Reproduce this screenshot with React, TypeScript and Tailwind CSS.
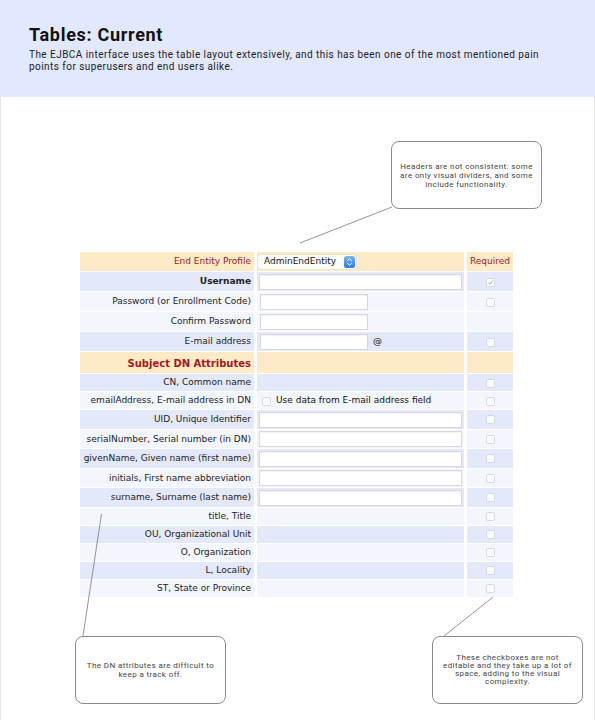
import React from "react";

const RED = "text-[#a3191c]";

function Check({ checked = false }: { checked?: boolean }) {
  return (
    <span className="flex h-[9px] w-[9px] items-center justify-center rounded-[2px] border border-[#d6d9e0] bg-[#fbfcfe]">
      {checked && (
        <svg width="7" height="7" viewBox="0 0 7 7">
          <path d="M1.2 3.8 L2.8 5.3 L5.8 1.5" fill="none" stroke="#9a9a9a" strokeWidth="0.9" />
        </svg>
      )}
    </span>
  );
}

function Input({ wide = false }: { wide?: boolean }) {
  return (
    <div
      className={`h-[16px] ${wide ? "ml-[2px] w-[203px]" : "ml-[3px] w-[108px]"} border border-[#d5d8de] bg-white shadow-[inset_0_1px_1px_rgba(0,0,0,0.05)]`}
    />
  );
}

type RowProps = {
  label: React.ReactNode;
  bg: string;
  h: string;
  value?: React.ReactNode;
  req?: React.ReactNode;
  bold?: boolean;
};

function Row({ label, bg, h, value, req, bold }: RowProps) {
  return (
    <div className={`grid grid-cols-[174px_207px_46px] gap-x-[3px] ${h}`}>
      <div className={`${bg} flex items-center justify-end pr-[3px] pt-[1px] ${bold ? "font-bold" : ""}`}>{label}</div>
      <div className={`${bg} flex items-center pt-[1px]`}>{value}</div>
      <div className={`${bg} flex items-center justify-center pt-[1px]`}>{req}</div>
    </div>
  );
}

const BLUE = "bg-[#e3e9fb]";
const LIGHT = "bg-[#f4f6fd]";
const PEACH = "bg-[#fdebc8]";

const CALLOUT =
  "absolute flex h-[68px] w-[151px] items-center justify-center whitespace-nowrap rounded-[8px] border border-[#8c8c8c] bg-white text-center text-[8px] tracking-[0.4px] text-[#444]";

export default function App() {
  return (
    <div className="relative h-[720px] w-[595px] overflow-hidden bg-white font-['Roboto',sans-serif]">
      <header className="h-[97px] bg-[#e2e8fd] px-[29px] pt-[24px]">
        <h1 className="text-[18px] font-bold leading-[22px] tracking-[0.7px] text-[#111]">Tables: Current</h1>
        <p className="mt-[3px] whitespace-nowrap text-[10px] leading-[11.5px] tracking-[0.45px] text-[#222]">
          The EJBCA interface uses the table layout extensively, and this has been one of the most mentioned pain
          <br />
          points for superusers and end users alike.
        </p>
      </header>
      <div className="h-[623px] border-x border-[#e4e4e4] pl-[79px] pt-[155px]">
        <div className="flex flex-col gap-y-[1px] font-['DejaVu_Sans','Verdana',sans-serif] text-[9px] text-[#222]">
          <Row
            bg={PEACH}
            h="h-[19px]"
            label={<span className={RED}>End Entity Profile</span>}
            value={
              <div className="ml-[1px] flex h-[14px] w-[98px] items-center justify-between rounded-[2px] bg-white pl-[6px] pr-[1px] shadow-[0_0_1px_rgba(0,0,0,0.35)]">
                <span className="text-[#111]">AdminEndEntity</span>
                <svg width="11" height="12" viewBox="0 0 11 12">
                  <defs>
                    <linearGradient id="g" x1="0" y1="0" x2="0" y2="1">
                      <stop offset="0" stopColor="#7fb3f5" />
                      <stop offset="1" stopColor="#2f7ae5" />
                    </linearGradient>
                  </defs>
                  <rect x="0" y="0" width="11" height="12" rx="2.5" fill="url(#g)" />
                  <path d="M3.3 4.8 L5.5 2.8 L7.7 4.8" fill="none" stroke="#fff" strokeWidth="1" />
                  <path d="M3.3 7.2 L5.5 9.2 L7.7 7.2" fill="none" stroke="#fff" strokeWidth="1" />
                </svg>
              </div>
            }
            req={<span className={RED}>Required</span>}
          />
          <Row bg={BLUE} h="h-[19px]" bold label="Username" value={<Input wide />} req={<Check checked />} />
          <Row bg={LIGHT} h="h-[19px]" label="Password (or Enrollment Code)" value={<Input />} req={<Check />} />
          <Row bg={LIGHT} h="h-[19px]" label="Confirm Password" value={<Input />} />
          <Row
            bg={BLUE}
            h="h-[19px]"
            label="E-mail address"
            value={
              <>
                <Input />
                <span className="ml-[5px] text-[#111]">@</span>
              </>
            }
            req={<Check />}
          />
          <Row
            bg={PEACH}
            h="h-[21px]"
            label={<span className={`${RED} text-[10px] font-bold`}>Subject DN Attributes</span>}
          />
          <Row bg={BLUE} h="h-[17px]" label="CN, Common name" req={<Check />} />
          <Row
            bg={LIGHT}
            h="h-[17px]"
            label="emailAddress, E-mail address in DN"
            value={
              <div className="ml-[5px] flex items-center gap-[5px]">
                <Check />
                <span className="text-[#111]">Use data from E-mail address field</span>
              </div>
            }
            req={<Check />}
          />
          <Row bg={BLUE} h="h-[18.5px]" label="UID, Unique Identifier" value={<Input wide />} req={<Check />} />
          <Row bg={LIGHT} h="h-[18.5px]" label="serialNumber, Serial number (in DN)" value={<Input wide />} req={<Check />} />
          <Row bg={BLUE} h="h-[18.5px]" label="givenName, Given name (first name)" value={<Input wide />} req={<Check />} />
          <Row bg={LIGHT} h="h-[18.5px]" label="initials, First name abbreviation" value={<Input wide />} req={<Check />} />
          <Row bg={BLUE} h="h-[18.5px]" label="surname, Surname (last name)" value={<Input wide />} req={<Check />} />
          <Row bg={LIGHT} h="h-[17px]" label="title, Title" req={<Check />} />
          <Row bg={BLUE} h="h-[17px]" label="OU, Organizational Unit" req={<Check />} />
          <Row bg={LIGHT} h="h-[17px]" label="O, Organization" req={<Check />} />
          <Row bg={BLUE} h="h-[17px]" label="L, Locality" req={<Check />} />
          <Row bg={LIGHT} h="h-[17px]" label="ST, State or Province" req={<Check />} />
        </div>
      </div>

      <svg className="pointer-events-none absolute left-0 top-0" width="595" height="720">
        <line x1="300" y1="243" x2="392" y2="207" stroke="#7a7a7a" strokeWidth="0.8" />
        <line x1="101.5" y1="514" x2="83" y2="636" stroke="#7a7a7a" strokeWidth="0.8" />
        <line x1="493" y1="597" x2="444" y2="636" stroke="#7a7a7a" strokeWidth="0.8" />
      </svg>

      <div className={`${CALLOUT} left-[391px] top-[141px] leading-[9px]`}>
        Headers are not consistent: some
        <br />
        are only visual dividers, and some
        <br />
        include functionality.
      </div>
      <div className={`${CALLOUT} left-[75px] top-[636px] leading-[9px]`}>
        The DN attributes are difficult to
        <br />
        keep a track off.
      </div>
      <div className={`${CALLOUT} left-[432px] top-[636px] leading-[8px]`}>
        These checkboxes are not
        <br />
        editable and they take up a lot of
        <br />
        space, adding to the visual
        <br />
        complexity.
      </div>
    </div>
  );
}
